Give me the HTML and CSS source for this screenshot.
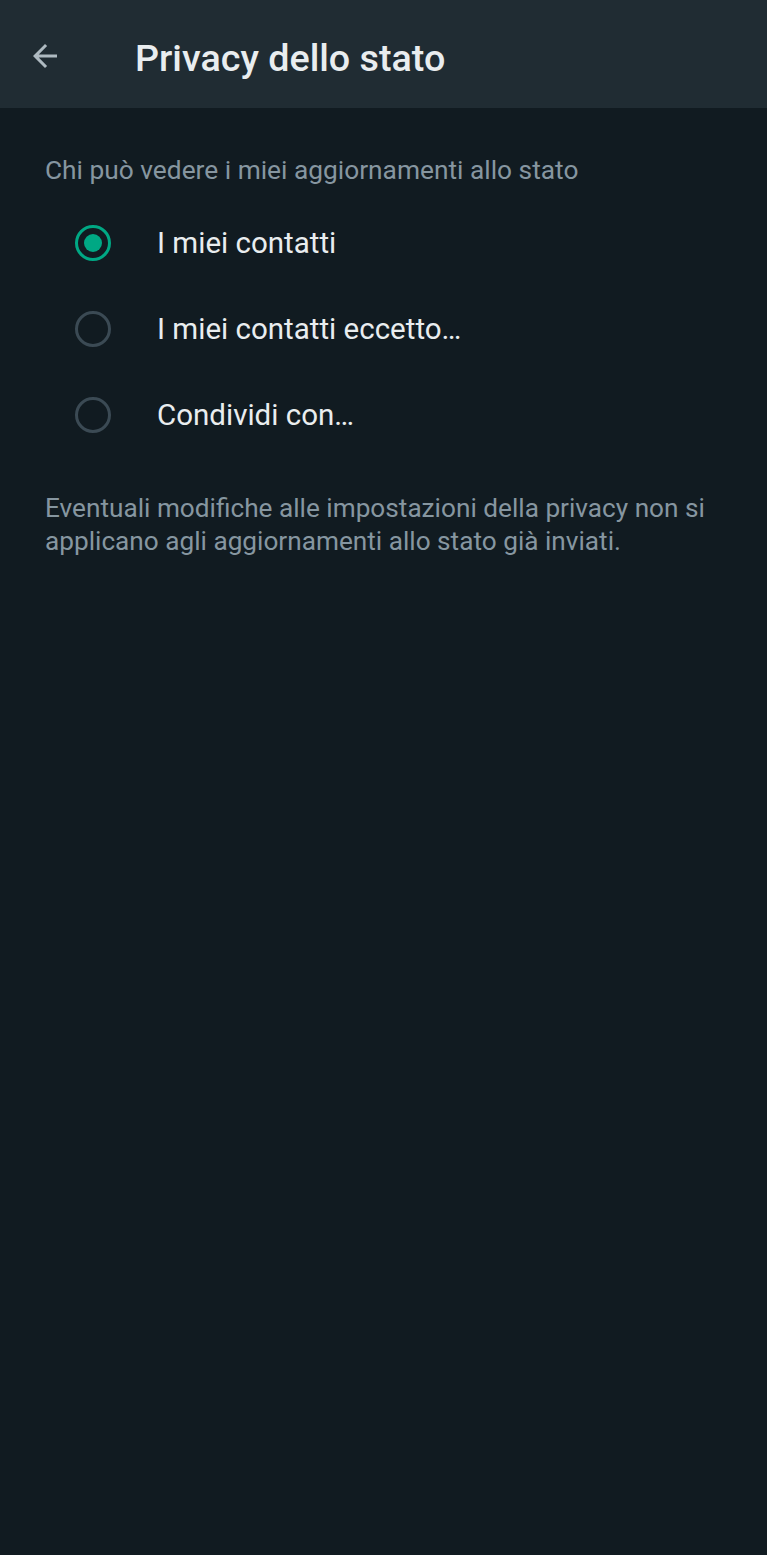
FILE: index.html
```html
<!DOCTYPE html>
<html lang="it">
<head>
    <meta charset="UTF-8">
    <meta name="viewport" content="width=device-width, initial-scale=1.0">
    <title>Privacy dello stato</title>
    <link rel="stylesheet" href="styles.css">
</head>
<body>

    <header class="topbar">
        <button class="back-btn" aria-label="Indietro">
            <svg width="36" height="36" viewBox="0 0 24 24">
                <path d="M20 11H7.83l5.59-5.59L12 4l-8 8 8 8 1.41-1.41L7.83 13H20v-2z" fill="#aebac1"/>
            </svg>
        </button>
        <h1>Privacy dello stato</h1>
    </header>

    <main class="content">
        <p class="section-title">Chi può vedere i miei aggiornamenti allo stato</p>

        <!-- Status visibility options -->
        <div class="options">
            <label class="option">
                <input type="radio" name="privacy" checked>
                <span class="radio"></span>
                <span class="option-text">I miei contatti</span>
            </label>
            <label class="option">
                <input type="radio" name="privacy">
                <span class="radio"></span>
                <span class="option-text">I miei contatti eccetto…</span>
            </label>
            <label class="option">
                <input type="radio" name="privacy">
                <span class="radio"></span>
                <span class="option-text">Condividi con…</span>
            </label>
        </div>

        <p class="note">Eventuali modifiche alle impostazioni della privacy non si applicano agli aggiornamenti allo stato già inviati.</p>
    </main>

</body>
</html>
```

FILE: styles.css
```css
body {
    font-family: Roboto, "Noto Sans", sans-serif;
    background-color: #111b21;
    margin: 0;
    padding: 0;
    min-height: 1555px;
}
.topbar {
    height: 108px;
    background-color: #202c33;
    display: flex;
    align-items: center;
    padding: 0 0 0 27px;
    box-sizing: border-box;
}
.back-btn {
    background: none;
    border: none;
    padding: 0;
    width: 36px;
    height: 36px;
    margin-top: 4px;
    cursor: pointer;
}
.topbar h1 {
    margin: 8px 0 0 72px;
    font-size: 37.7px;
    font-weight: 500;
    color: #e9edef;
}
.content {
    padding: 0 45px;
}
.section-title {
    margin: 0;
    padding-top: 47px;
    font-size: 26.3px;
    line-height: 30px;
    color: #8696a0;
}
.options {
    margin-top: 15px;
}
.option {
    display: flex;
    align-items: center;
    height: 86px;
    cursor: pointer;
}
.option input {
    display: none;
}
.radio {
    width: 30px;
    height: 30px;
    margin-left: 30px;
    border: 3px solid #3b4a54;
    border-radius: 50%;
    box-sizing: content-box;
    position: relative;
}
.option input:checked + .radio {
    border-color: #00a884;
}
.option input:checked + .radio::after {
    content: "";
    position: absolute;
    top: 6px;
    left: 6px;
    width: 18px;
    height: 18px;
    border-radius: 50%;
    background-color: #00a884;
}
.option-text {
    margin-left: 46px;
    font-size: 29.5px;
    color: #e9edef;
}
.note {
    margin: 34px 0 0;
    font-size: 26.2px;
    line-height: 33px;
    color: #8696a0;
}
```
